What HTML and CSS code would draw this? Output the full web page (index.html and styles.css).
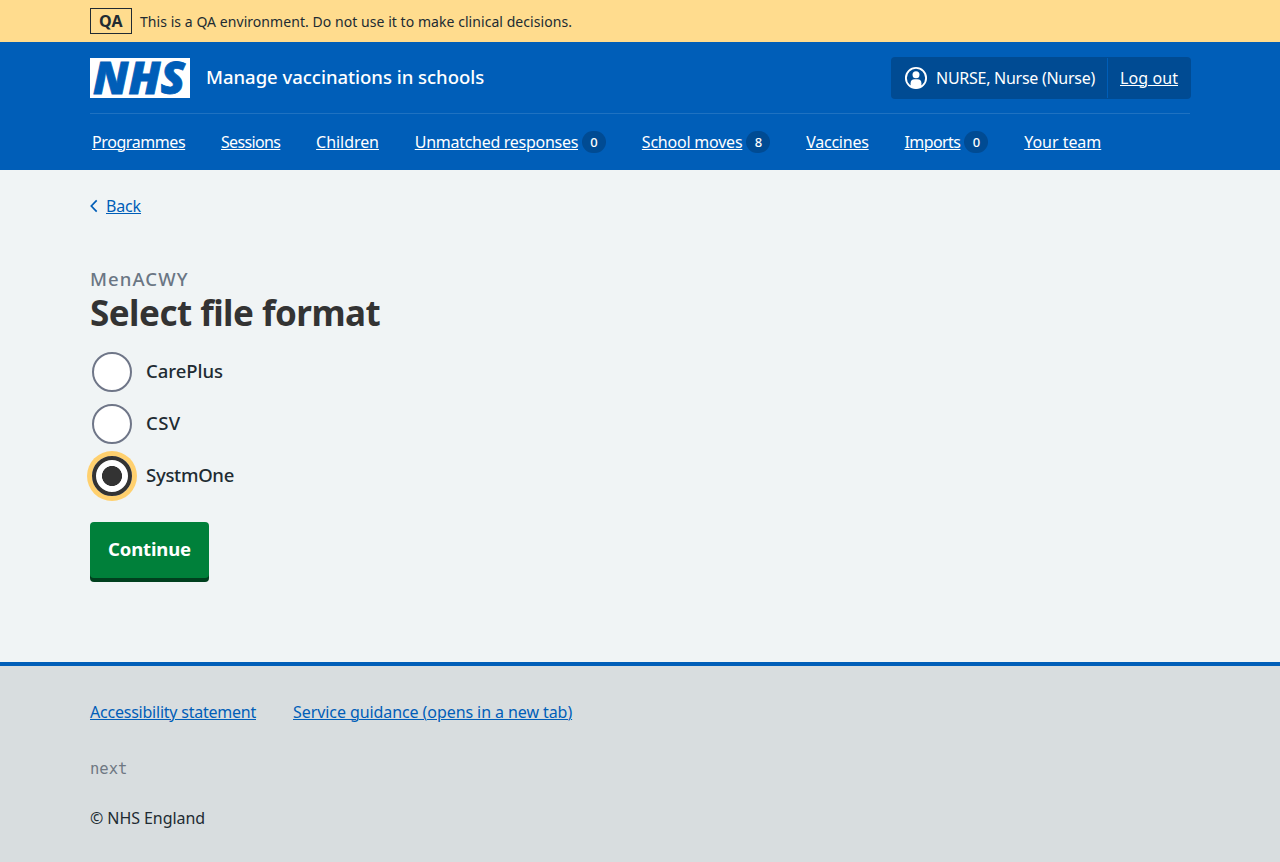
FILE: index.html
```
<!DOCTYPE html>
<html lang="en">
<head>
<meta charset="utf-8">
<title>Select file format - Manage vaccinations in schools</title>
<link rel="stylesheet" href="styles.css">
</head>
<body>
<div class="environment">
  <div class="container environment-inner">
    <strong class="environment-tag">QA</strong>
    <span class="environment-text">This is a QA environment. Do not use it to make clinical decisions.</span>
  </div>
</div>
<header class="header">
  <div class="container">
    <div class="header-top">
      <svg class="logo" viewBox="0 0 100 40" role="img" aria-label="NHS">
        <rect width="100" height="40" fill="#fff"/>
        <text class="logo-text" x="3" y="36.400" textLength="92" lengthAdjust="spacingAndGlyphs">NHS</text>
      </svg>
      <a class="service-name">Manage vaccinations in schools</a>
      <div class="account">
        <span class="account-user">
          <svg class="account-icon" viewBox="0 0 24 24" aria-hidden="true">
            <circle cx="12" cy="12" r="10.1" fill="none" stroke="#fff" stroke-width="1.900"/>
            <circle cx="12" cy="8.8" r="3.5" fill="#fff"/>
            <path d="M6.600 20.400v-3.200a4 4 0 0 1 4-4h2.800a4 4 0 0 1 4 4v3.200A11 11 0 0 1 12 22.500a11 11 0 0 1-5.400-2.100z" fill="#fff"/>
          </svg>
          <span class="account-name">NURSE, Nurse (Nurse)</span>
        </span>
        <span class="account-logout"><a class="logout-link">Log out</a></span>
      </div>
    </div>
    <nav class="nav">
      <span class="nav-item"><a class="programmes">Programmes</a></span>
      <span class="nav-item"><a class="sessions">Sessions</a></span>
      <span class="nav-item"><a class="children">Children</a></span>
      <span class="nav-item"><a class="unmatched">Unmatched responses</a><span class="count">0</span></span>
      <span class="nav-item"><a class="moves">School moves</a><span class="count">8</span></span>
      <span class="nav-item"><a class="vaccines">Vaccines</a></span>
      <span class="nav-item"><a class="imports">Imports</a><span class="count">0</span></span>
      <span class="nav-item"><a class="team">Your team</a></span>
    </nav>
  </div>
</header>
<main class="container main">
  <div class="back">
    <svg class="back-icon" viewBox="0 0 8 14" aria-hidden="true"><path d="M6.700 1.400 1.300 7l5.400 5.600" fill="none" stroke="#005eb8" stroke-width="1.700"/></svg>
    <a class="back-link">Back</a>
  </div>
  <span class="caption">MenACWY</span>
  <h1 class="heading">Select file format</h1>
  <div class="radios">
    <label class="radio"><span class="dot"></span><span class="radio-label careplus">CarePlus</span></label>
    <label class="radio"><span class="dot"></span><span class="radio-label csv">CSV</span></label>
    <label class="radio"><span class="dot dot-checked"></span><span class="radio-label systmone">SystmOne</span></label>
  </div>
  <button class="button" type="button">Continue</button>
</main>
<footer class="footer">
  <div class="container">
    <div class="footer-links">
      <a class="accessibility">Accessibility statement</a>
      <a class="guidance">Service guidance (opens in a new tab)</a>
    </div>
    <div class="version">next</div>
    <div class="copyright">© NHS England</div>
  </div>
</footer>
</body>
</html>
```
FILE: styles.css
```
* { box-sizing: border-box; }
body {
  margin: 0;
  height: 862px;
  display: flex;
  flex-direction: column;
  background: #f0f4f5;
  color: #212b32;
  font: 16px/24px "Noto Sans", "Open Sans", sans-serif;
  white-space: nowrap;
}
.container { width: 1100px; margin: 0 auto; }
a { display: inline-block; }

.environment { background: #ffdc8e; height: 42px; }
.environment-inner { display: flex; align-items: center; gap: 8px; height: 42px; }
.environment-tag {
  width: 42px;
  height: 26px;
  border: 1px solid #212b32;
  text-align: center;
  line-height: 24px;
  letter-spacing: .3px;
}
.environment-text { font-size: 14px; letter-spacing: .055px; padding-top: 1px; }

.header { background: #005eb8; height: 128px; color: #fff; }
.header-top {
  display: flex;
  align-items: center;
  height: 72px;
  border-bottom: 1px solid #1f72c1;
}
.logo { width: 100px; height: 40px; margin-right: 16px; overflow: visible; }
.logo-text {
  font: italic 800 45px "Open Sans", "Noto Sans", sans-serif;
  fill: #005eb8;
  stroke: #005eb8;
  stroke-width: .8px;
}
.service-name { font-size: 18.500px; font-weight: 500; letter-spacing: -.02px; padding-bottom: 1px; }
.account {
  display: flex;
  width: 300px;
  height: 42px;
  margin: 0 -1px 0 auto;
  background: #004b93;
  border-radius: 4px;
}
.account-user { display: flex; align-items: center; width: 216px; padding-left: 13px; }
.account-icon { width: 24px; height: 24px; margin-right: 8px; }
.account-name { letter-spacing: -.269px; }
.account-logout {
  margin: 1px 0;
  border-left: 1px solid #005eb8;
  padding: 8px 12px;
}
.logout-link { letter-spacing: .085px; }
.nav { display: flex; gap: 35.800px; align-items: center; height: 56px; padding-left: 2px; }
.nav-item { display: flex; align-items: center; }
.nav a, .logout-link, .back-link, .footer a {
  text-decoration: underline;
  text-decoration-thickness: 1px;
  text-underline-offset: 1px;
}
.count {
  width: 24px;
  height: 22px;
  margin-left: 4px;
  border-radius: 12px;
  background: #004b93;
  font-size: 13px;
  line-height: 23px;
  font-weight: 500;
  text-align: center;
}
.programmes { letter-spacing: -.42px; }
.sessions { letter-spacing: -.645px; }
.children { letter-spacing: -.06px; }
.unmatched { letter-spacing: -.28px; }
.moves { letter-spacing: -.22px; }
.vaccines { letter-spacing: -.228px; }
.imports { letter-spacing: -.565px; }
.team { letter-spacing: -.036px; }

.main { flex: 1; padding-top: 24px; }
.back { display: flex; align-items: center; gap: 8px; color: #005eb8; }
.back-icon { width: 8px; height: 14px; margin-bottom: 1px; }
.back-link { letter-spacing: -.15px; }
.caption {
  display: block;
  margin-top: 48px;
  color: #6a7684;
  font-size: 18.500px;
  font-weight: 500;
  line-height: 26px;
  letter-spacing: 1.100px;
}
.heading {
  margin: 1px 0 15px;
  color: #333;
  font-size: 35px;
  line-height: 40px;
  letter-spacing: -.53px;
}
.radios { display: grid; gap: 12px; padding: 4px 2px 0; }
.radio { display: flex; align-items: center; height: 40px; gap: 14px; }
.dot {
  width: 40px;
  height: 40px;
  border: 2px solid #6f7688;
  border-radius: 50%;
  background: #fff;
}
.dot-checked {
  border: 4px solid #333;
  background: radial-gradient(circle, #333 9.700px, #fff 10.300px);
  background-origin: border-box;
  box-shadow: 0 0 0 5px #ffd06e;
}
.radio-label { font-size: 18.500px; font-weight: 500; padding-bottom: 2px; }
.careplus { letter-spacing: -.05px; }
.csv { letter-spacing: .4px; }
.systmone { letter-spacing: -.28px; }
.button {
  display: block;
  width: 119px;
  height: 56px;
  margin-top: 26px;
  padding: 0 0 2px;
  border: 0;
  border-radius: 4px;
  background: #00803a;
  box-shadow: 0 4px 0 #00401e;
  color: #fff;
  font: 700 18.500px/24px "Noto Sans", sans-serif;
  letter-spacing: -.17px;
}

.footer { height: 200px; border-top: 4px solid #005eb8; background: #d8dddf; padding-top: 34px; }
.footer-links { display: flex; gap: 37px; color: #005eb8; }
.accessibility { letter-spacing: -.228px; }
.guidance { letter-spacing: -.08px; }
.version {
  margin-top: 33px;
  color: #6f7883;
  font-family: "DejaVu Sans Mono", monospace;
  font-size: 15.500px;
}
.copyright { margin-top: 25px; letter-spacing: -.068px; }
```
